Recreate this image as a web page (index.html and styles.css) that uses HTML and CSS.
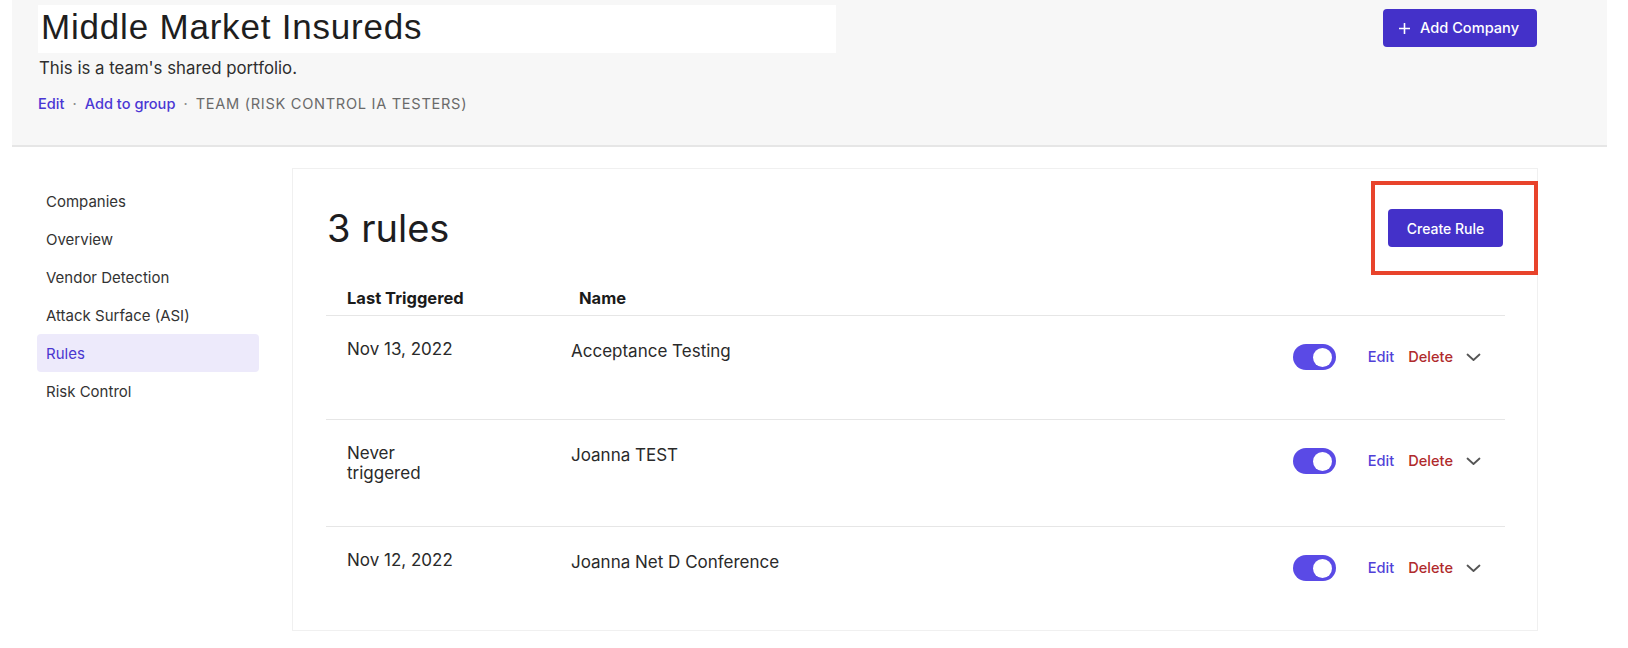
FILE: index.html
```html
<!DOCTYPE html>
<html lang="en">
<head>
<meta charset="utf-8">
<title>Middle Market Insureds – Rules</title>
<link rel="stylesheet" href="styles.css">
</head>
<body>
<header class="header">
  <div class="header-main">
    <div class="title-box"><h1 class="title">Middle Market Insureds</h1></div>
    <p class="subtitle">This is a team's shared portfolio.</p>
    <div class="meta">
      <a class="meta-link">Edit</a>
      <span class="meta-dot">·</span>
      <a class="meta-link">Add to group</a>
      <span class="meta-dot">·</span>
      <span class="meta-team">TEAM (RISK CONTROL IA TESTERS)</span>
    </div>
  </div>
  <button class="btn btn-add"><svg class="plus" width="11" height="11" viewBox="0 0 11 11"><path d="M5.5 0.5v10M0.5 5.5h10" stroke="#fff" stroke-width="1.6" stroke-linecap="round"/></svg>Add Company</button>
</header>

<div class="main">
  <nav class="sidebar">
    <a class="nav-item">Companies</a>
    <a class="nav-item">Overview</a>
    <a class="nav-item">Vendor Detection</a>
    <a class="nav-item">Attack Surface (ASI)</a>
    <a class="nav-item active">Rules</a>
    <a class="nav-item">Risk Control</a>
  </nav>

  <section class="card">
    <div class="card-head">
      <h2 class="count">3 rules</h2>
      <button class="btn btn-create">Create Rule</button>
    </div>
    <div class="table">
      <div class="thead">
        <div class="th">Last Triggered</div>
        <div class="th th-name">Name</div>
      </div>
      <div class="row row-1">
        <div class="cell">Nov 13, 2022</div>
        <div class="cell cell-name">Acceptance Testing</div>
        <div class="actions">
          <span class="toggle"><span class="knob"></span></span>
          <a class="act act-edit">Edit</a>
          <a class="act act-del">Delete</a>
          <svg class="chev" width="15" height="9" viewBox="0 0 15 9"><polyline points="1.5,1.5 7.5,7 13.5,1.5" fill="none" stroke="#555" stroke-width="1.8" stroke-linecap="round" stroke-linejoin="round"/></svg>
        </div>
      </div>
      <div class="row row-2">
        <div class="cell cell-never">Never<br>triggered</div>
        <div class="cell cell-name">Joanna TEST</div>
        <div class="actions">
          <span class="toggle"><span class="knob"></span></span>
          <a class="act act-edit">Edit</a>
          <a class="act act-del">Delete</a>
          <svg class="chev" width="15" height="9" viewBox="0 0 15 9"><polyline points="1.5,1.5 7.5,7 13.5,1.5" fill="none" stroke="#555" stroke-width="1.8" stroke-linecap="round" stroke-linejoin="round"/></svg>
        </div>
      </div>
      <div class="row row-3">
        <div class="cell">Nov 12, 2022</div>
        <div class="cell cell-name">Joanna Net D Conference</div>
        <div class="actions">
          <span class="toggle"><span class="knob"></span></span>
          <a class="act act-edit">Edit</a>
          <a class="act act-del">Delete</a>
          <svg class="chev" width="15" height="9" viewBox="0 0 15 9"><polyline points="1.5,1.5 7.5,7 13.5,1.5" fill="none" stroke="#555" stroke-width="1.8" stroke-linecap="round" stroke-linejoin="round"/></svg>
        </div>
      </div>
    </div>
  </section>
</div>

<div class="highlight-box"></div>
</body>
</html>
```

FILE: styles.css
```css
* { box-sizing: border-box; }

body {
  margin: 0;
  font-family: Inter, "Noto Sans", sans-serif;
  color: #2b2b2b;
  background: #fff;
}

a { cursor: pointer; }

.header {
  margin: 0 21px 0 12px;
  height: 147px;
  padding: 5px 70px 0 26px;
  background: #f7f7f7;
  border-bottom: 2px solid #e6e6e6;
  display: flex;
  justify-content: space-between;
  align-items: flex-start;
}

.title-box {
  width: 798px;
  height: 48px;
  background: #fff;
  padding-left: 3px;
}

.title {
  margin: 0;
  font-family: "Liberation Sans", Arial, sans-serif;
  font-weight: 400;
  font-size: 35px;
  letter-spacing: 0.8px;
  line-height: 44px;
  color: #1e1e1e;
}

.subtitle {
  margin: 5px 0 0 1px;
  font-size: 16.8px;
  line-height: 20px;
  color: #2e2e2e;
}

.meta {
  margin-top: 16px;
  display: flex;
  align-items: center;
  font-size: 14.6px;
  line-height: 20px;
}

.meta-link {
  color: #4a36d4;
  font-weight: 500;
}

.meta-dot {
  color: #8a8a8a;
  margin: 0 8px;
}

.meta-team {
  color: #6a6a6a;
  letter-spacing: 0.7px;
}

.btn {
  border: none;
  border-radius: 4px;
  background: #4431c9;
  color: #fff;
  font-family: Inter, "Noto Sans", sans-serif;
  font-size: 14px;
  font-weight: 500;
  height: 38px;
  display: inline-flex;
  align-items: center;
  cursor: pointer;
}

.btn-add {
  margin-top: 4px;
  width: 154px;
  padding: 0 16px;
  gap: 10px;
  font-size: 14.6px;
}

.main {
  display: flex;
  align-items: flex-start;
  gap: 33px;
  padding: 21px 0 0 37px;
}

.sidebar {
  width: 222px;
  padding-top: 14px;
  display: flex;
  flex-direction: column;
}

.nav-item {
  height: 38px;
  display: flex;
  align-items: center;
  padding-left: 9px;
  font-size: 15px;
  color: #333;
  border-radius: 4px;
}

.nav-item.active {
  background: #edeafb;
  color: #4a36d0;
}

.card {
  width: 1246px;
  border: 1px solid #f0f0f0;
  background: #fff;
  padding: 36px 32px 0 33px;
}

.card-head {
  display: flex;
  justify-content: space-between;
  align-items: center;
  height: 46px;
}

.count {
  margin: 0 0 0 1px;
  font-size: 38px;
  font-weight: 400;
  line-height: 46px;
  color: #1d1d1f;
}

.btn-create {
  width: 115px;
  justify-content: center;
  margin-right: 2px;
}

.table {
  margin-top: 21px;
}

.thead {
  display: grid;
  grid-template-columns: 224px 1fr;
  height: 44px;
  padding-top: 16px;
  border-bottom: 1px solid #e6e6e6;
}

.th {
  padding-left: 21px;
  font-size: 16.5px;
  font-weight: 700;
  line-height: 20px;
  color: #1a1a1a;
}

.th-name { padding-left: 29px; }

.row {
  display: grid;
  grid-template-columns: 224px 1fr auto;
  height: 105px;
  border-top: 1px solid #e6e6e6;
  padding-top: 23px;
}

.row-1 { border-top: none; height: 103px; }
.row-2 { height: 107px; }
.row-3 { height: 104px; }

.cell {
  padding-left: 21px;
  font-size: 17px;
  line-height: 20px;
  color: #2a2a2a;
}

.cell-name { padding-top: 2px; }

.actions {
  display: flex;
  align-items: center;
  height: 26px;
  margin-top: 5px;
  padding-right: 24px;
}

.toggle {
  width: 43px;
  height: 26px;
  border-radius: 13px;
  background: #5a4ae6;
  display: flex;
  align-items: center;
  justify-content: flex-end;
  padding-right: 4px;
  margin-right: 32px;
}

.knob {
  width: 19px;
  height: 19px;
  border-radius: 50%;
  background: #fff;
}

.act {
  font-size: 14.6px;
  font-weight: 500;
  line-height: 20px;
}

.act-edit { color: #5140d8; margin-right: 14px; }
.act-del { color: #b02a2c; margin-right: 13px; }

.chev { display: block; }

.highlight-box {
  position: absolute;
  top: 181px;
  left: 1371px;
  width: 167px;
  height: 94px;
  border: 4px solid #e8432b;
  pointer-events: none;
}
```
